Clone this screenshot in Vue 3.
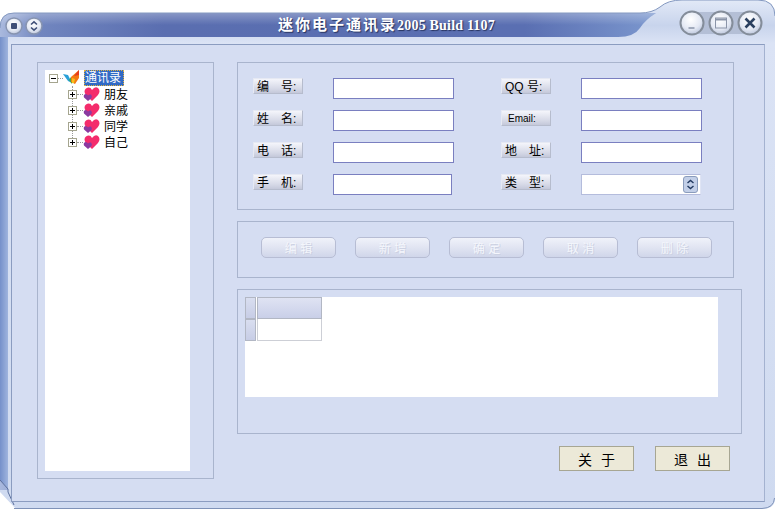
<script setup>
const leftRows = [
  { label: '编　号:', narrow: false },
  { label: '姓　名:', narrow: false },
  { label: '电　话:', narrow: false },
  { label: '手　机:', narrow: true },
]
const rightRows = [
  { label: 'QQ 号:' },
  { label: 'Email:', small: true },
  { label: '地　址:' },
  { label: '类　型:', select: true },
]
const actions = ['编 辑', '新 增', '确 定', '取 消', '删 除']
const groups = ['朋友', '亲戚', '同学', '自己']
</script>

<template>
  <div class="window">
    <svg class="skin" width="775" height="509" viewBox="0 0 775 509">
      <defs>
        <linearGradient id="frame" x1="0" y1="0" x2="0" y2="1">
          <stop offset="0" stop-color="#e2e9f7" />
          <stop offset="0.05" stop-color="#c8d4ec" />
          <stop offset="0.085" stop-color="#dbe3f5" />
          <stop offset="1" stop-color="#cfdaf0" />
        </linearGradient>
        <linearGradient id="title" x1="0" y1="0" x2="1" y2="0">
          <stop offset="0" stop-color="#a9b9de" />
          <stop offset="0.06" stop-color="#7186bf" />
          <stop offset="0.25" stop-color="#5a6eb0" />
          <stop offset="0.8" stop-color="#5a6fb2" />
          <stop offset="1" stop-color="#7b97ce" />
        </linearGradient>
        <linearGradient id="gloss" x1="0" y1="0" x2="0" y2="1">
          <stop offset="0" stop-color="#ffffff" stop-opacity="0.28" />
          <stop offset="0.5" stop-color="#ffffff" stop-opacity="0" />
        </linearGradient>
        <linearGradient id="edge" x1="0" y1="0" x2="1" y2="0">
          <stop offset="0" stop-color="#7590ca" />
          <stop offset="1" stop-color="#9fb4de" />
        </linearGradient>
        <radialGradient id="knob" cx="0.45" cy="0.35" r="0.7">
          <stop offset="0" stop-color="#ffffff" />
          <stop offset="0.6" stop-color="#e4e9f4" />
          <stop offset="1" stop-color="#b5c0d8" />
        </radialGradient>
      </defs>
      <path
        d="M0 28 Q0 13 14 13 L640 13 Q652 13 660 7 Q668 0 682 0 L758 0 Q775 0 775 16 L775 498 Q775 509 762 509 L16 509 L0 492 Z"
        fill="url(#frame)"
      />
      <path d="M0 28 Q0 13 14 13 L656 13 Q645 20 640 28 Q634 37 618 37 L8 37 L8 490 L0 490 Z" fill="url(#title)" />
      <path d="M0 28 Q0 13 14 13 L656 13 Q645 20 640 28 Q634 37 618 37 L0 37 Z" fill="url(#gloss)" />
      <path d="M0 37 H8 V488 L0 480 Z" fill="url(#edge)" />
      <path d="M0 28 Q0 13 14 13 L640 13 Q652 13 660 7 Q668 0 682 0 L758 0 Q775 0 775 16" fill="none" stroke="#8398c0" />
      <path d="M0 480 L8 489 L8 492 L14 505" fill="none" stroke="#5b6f9c" />
      <path d="M14 508.5 H762 Q774 508 774.5 498" fill="none" stroke="#7f92b8" />
      <path d="M681 23 Q681 13 692 12 H750 Q761 13 761 23 Q761 34 750 34 H692 Q681 34 681 23 Z" fill="#b4bfd6" />
    </svg>

    <div class="titlebar">
      <div class="sys-left">
        <svg class="knob" width="18" height="18" viewBox="0 0 18 18">
          <circle cx="9" cy="9" r="8" fill="url(#knob)" stroke="#8794b0" stroke-width="1.4" />
          <rect x="6" y="6" width="6" height="6" rx="1" fill="#3f4f78" />
        </svg>
        <svg class="knob" width="18" height="18" viewBox="0 0 18 18">
          <circle cx="9" cy="9" r="8" fill="url(#knob)" stroke="#8794b0" stroke-width="1.4" />
          <path d="M6 7.5 L9 4.8 L12 7.5 M6 10.5 L9 13.2 L12 10.5" fill="none" stroke="#3f4f78" stroke-width="1.6" />
        </svg>
      </div>
      <div class="title"><span class="title-cjk">迷你电子通讯录</span>2005 Build 1107</div>
      <div class="sys-right">
        <svg class="knob" width="26" height="26" viewBox="0 0 26 26">
          <circle cx="13" cy="13" r="11.5" fill="url(#knob)" stroke="#848d9a" stroke-width="2" />
          <path d="M9.5 18 H15.5" stroke="#8a94a8" stroke-width="1.5" />
        </svg>
        <svg class="knob" width="26" height="26" viewBox="0 0 26 26">
          <circle cx="13" cy="13" r="11.5" fill="url(#knob)" stroke="#848d9a" stroke-width="2" />
          <rect x="7.5" y="8" width="11" height="10" fill="none" stroke="#8a94a8" />
          <path d="M7.5 9.5 H18.5" stroke="#8a94a8" stroke-width="2" />
        </svg>
        <svg class="knob" width="26" height="26" viewBox="0 0 26 26">
          <circle cx="13" cy="13" r="11.5" fill="url(#knob)" stroke="#848d9a" stroke-width="2" />
          <path d="M8.5 8.5 L17.5 17.5 M17.5 8.5 L8.5 17.5" stroke="#2b4060" stroke-width="2.6" />
        </svg>
      </div>
    </div>

    <div class="panel">
      <aside class="group tree-box">
        <div class="tree">
          <div class="tree-row">
            <span class="expander">
              <svg width="9" height="9" viewBox="0 0 9 9"><path d="M1 3.5 H6" stroke="#000" /></svg>
            </span>
            <span class="dots"></span>
            <svg class="node-icon" width="17" height="16" viewBox="0 0 17 16">
              <path d="M0 4 L5 5 L9 13 L5 11 Z" fill="#2aa0d8" />
              <path d="M9 14 L6 10 L8 7 L10 8 Z" fill="#3fae49" />
              <path d="M8 12 L8 7 L16 0 L16 8 L12 14 Z" fill="#f47a12" />
              <path d="M11 6 L16 0 L16 5 Z" fill="#e63a1e" />
              <path d="M9 8 L12 9 L11 13 L9 13 Z" fill="#f6c21c" />
            </svg>
            <span class="selected">通讯录</span>
          </div>
          <div class="children">
            <div v-for="name in groups" :key="name" class="tree-row">
              <span class="expander">
                <svg width="9" height="9" viewBox="0 0 9 9"><path d="M1 3.5 H6 M3.5 1 V6" stroke="#000" /></svg>
              </span>
              <span class="dots short"></span>
              <svg class="node-icon" width="17" height="16" viewBox="0 0 17 16">
                <path d="M9 15 L3 9 Q0 5 3 2.5 Q7 0 9 4 Q12 0 15 2 Q18 5 15 9 Z" fill="#f42c6c" />
                <path d="M5 15 L1 11.5 Q0 8.5 2.5 8 Q4.5 8 5 9.5 Q6 8 8 8.5 Q9.5 10 8.5 12 Z" fill="#8b3aa0" />
              </svg>
              <span class="node-text">{{ name }}</span>
            </div>
          </div>
        </div>
      </aside>

      <main class="right">
        <section class="group form-box">
          <div class="form-col">
            <div v-for="row in leftRows" :key="row.label" class="form-row">
              <span class="label">{{ row.label }}</span>
              <input class="field" :class="{ narrow: row.narrow }" type="text" />
            </div>
          </div>
          <div class="form-col">
            <div v-for="row in rightRows" :key="row.label" class="form-row">
              <span class="label" :class="{ small: row.small }">{{ row.label }}</span>
              <div v-if="row.select" class="select">
                <span class="spin">
                  <svg width="9" height="11" viewBox="0 0 9 11">
                    <path d="M1.5 4 L4.5 1.5 L7.5 4 M1.5 7 L4.5 9.5 L7.5 7" fill="none" stroke="#223a60" stroke-width="1.4" />
                  </svg>
                </span>
              </div>
              <input v-else class="field" type="text" />
            </div>
          </div>
        </section>

        <section class="group action-box">
          <button v-for="a in actions" :key="a" class="action" type="button" disabled>{{ a }}</button>
        </section>

        <section class="group grid-box">
          <div class="grid-white">
            <div class="grid-row">
              <span class="indicator"></span>
              <span class="col-head"></span>
            </div>
            <div class="grid-row">
              <span class="indicator"></span>
              <span class="cell"></span>
            </div>
          </div>
        </section>

        <footer class="footer">
          <button class="plain" type="button">关 于</button>
          <button class="plain" type="button">退 出</button>
        </footer>
      </main>
    </div>
  </div>
</template>

<style>
html, body { margin: 0; background: #fff; }
</style>

<style scoped>
.window {
  position: relative;
  width: 775px;
  height: 509px;
  overflow: hidden;
  font-family: "Liberation Sans", "Noto Sans CJK SC", sans-serif;
  font-size: 12px;
  color: #000;
}
.skin { position: absolute; left: 0; top: 0; }

.titlebar {
  position: relative;
  height: 44px;
  display: grid;
  grid-template-columns: 1fr auto 1fr;
}
.sys-left { display: flex; gap: 2px; padding: 17px 0 0 5px; align-items: flex-start; }
.sys-right { display: flex; justify-content: flex-end; gap: 3px; padding: 10px 12px 0 0; align-items: flex-start; }
.knob { display: block; }
.title {
  padding-top: 15px;
  padding-right: 2px;
  font-family: "Liberation Serif", "Noto Sans CJK SC", serif;
  font-size: 14px;
  line-height: 20px;
  font-weight: 700;
  letter-spacing: 0.2px;
  color: #fff;
  text-shadow: 1px 1px 1px #26335f;
}
.title-cjk { font-size: 15px; letter-spacing: 2px; }

.panel {
  position: relative;
  margin-left: 11px;
  width: 754px;
  height: 458px;
  box-sizing: border-box;
  padding: 17px 0 0 25px;
  background: #d5ddf2;
  border: 1px solid #8b9cc0;
  border-right-color: #a4b2d0;
  display: flex;
  gap: 23px;
  align-items: flex-start;
}
.group {
  box-sizing: border-box;
  border: 1px solid #a9b4cd;
}

.tree-box {
  width: 177px;
  height: 417px;
  padding: 7px;
}
.tree {
  width: 145px;
  height: 401px;
  box-sizing: border-box;
  background: #fff;
  padding-left: 4px;
}
.tree-row {
  display: flex;
  align-items: center;
  height: 16px;
}
.expander {
  width: 9px;
  height: 9px;
  box-sizing: border-box;
  border: 1px solid #a5a58f;
  background: #fff;
  flex: none;
  overflow: hidden;
}
.expander svg { display: block; }
.dots { width: 5px; border-top: 1px dotted #999; flex: none; }
.dots.short { width: 6px; }
.node-icon { flex: none; }
.selected {
  margin-left: 4px;
  padding: 0 1px;
  width: 40px;
  height: 16px;
  box-sizing: border-box;
  line-height: 16px;
  background: #316ac5;
  color: #fff;
  outline: 1px dotted #e0b040;
  outline-offset: -1px;
  white-space: nowrap;
}
.children {
  margin-left: 23px;
  border-left: 1px dotted #999;
  height: 58px;
}
.children .tree-row { margin-left: -5px; }
.node-text { margin: 2px 0 0 4px; line-height: 16px; white-space: nowrap; }

.right { width: 505px; display: flex; flex-direction: column; align-items: flex-start; }
.form-box {
  width: 497px;
  height: 148px;
  padding: 15px 0 0 15px;
  display: flex;
  gap: 47px;
}
.form-col { display: flex; flex-direction: column; gap: 11px; }
.form-row { display: flex; gap: 30px; height: 21px; align-items: flex-start; }
.label {
  width: 50px;
  height: 16px;
  box-sizing: border-box;
  padding-left: 3px;
  line-height: 16px;
  white-space: nowrap;
  background: linear-gradient(#f4f5fb, #d5d8e6 70%, #c4c8da);
  border-right: 1px solid #b6bccd;
  border-bottom: 1px solid #b6bccd;
  border-left: 1px solid #e6e9f3;
  border-top: 1px solid #e6e9f3;
}
.label.small { font-size: 10px; padding-left: 6px; }
.field {
  width: 121px;
  height: 21px;
  box-sizing: border-box;
  margin: 0;
  padding: 0 3px;
  background: #fff;
  border: 1px solid #7a7fc0;
  outline: none;
}
.field.narrow { width: 119px; }
.select {
  width: 120px;
  height: 21px;
  box-sizing: border-box;
  background: #fff;
  border: 1px solid #b4bcdc;
  border-right-color: #dfe4f4;
  display: flex;
  justify-content: flex-end;
  align-items: center;
  padding-right: 2px;
}
.spin {
  width: 15px;
  height: 17px;
  box-sizing: border-box;
  border: 1px solid #8a9cbc;
  border-radius: 3px;
  background: #c2cfe8;
  display: flex;
  align-items: center;
  justify-content: center;
}

.action-box {
  margin-top: 11px;
  width: 497px;
  height: 57px;
  padding: 15px 0 0 23px;
  display: flex;
  gap: 19px;
}
.action {
  width: 75px;
  height: 21px;
  margin: 0;
  padding: 0;
  font: inherit;
  color: #f4f6fc;
  text-shadow: 1px 1px 0 #ccd1e2;
  background: linear-gradient(#f0f2fa, #dfe3f1 55%, #d0d6ea);
  border: 1px solid #b7bdd4;
  border-radius: 5px;
}

.grid-box {
  margin-top: 11px;
  width: 505px;
  height: 145px;
  padding: 7px 0 0 7px;
}
.grid-white {
  width: 473px;
  height: 100px;
  background: #fff;
}
.grid-row { display: flex; height: 22px; gap: 1px; }
.indicator {
  width: 11px;
  height: 22px;
  box-sizing: border-box;
  border: 1px solid #b2b7c4;
  background: linear-gradient(#d9def0, #c7cde6);
}
.col-head {
  width: 65px;
  height: 22px;
  box-sizing: border-box;
  border: 1px solid #b2b7c4;
  background: linear-gradient(#dfe3f3, #c9cfe8);
}
.cell {
  width: 65px;
  height: 22px;
  box-sizing: border-box;
  border: 1px solid #cdcfd6;
  border-top: none;
  background: #fff;
}

.footer {
  margin-top: 12px;
  width: 493px;
  display: flex;
  justify-content: flex-end;
  gap: 21px;
}
.plain {
  width: 75px;
  height: 25px;
  margin: 0;
  padding: 0;
  font: inherit;
  font-size: 14px;
  word-spacing: 5px;
  color: #000;
  background: #ece9d8;
  border: 1px solid #a7a693;
}
</style>
